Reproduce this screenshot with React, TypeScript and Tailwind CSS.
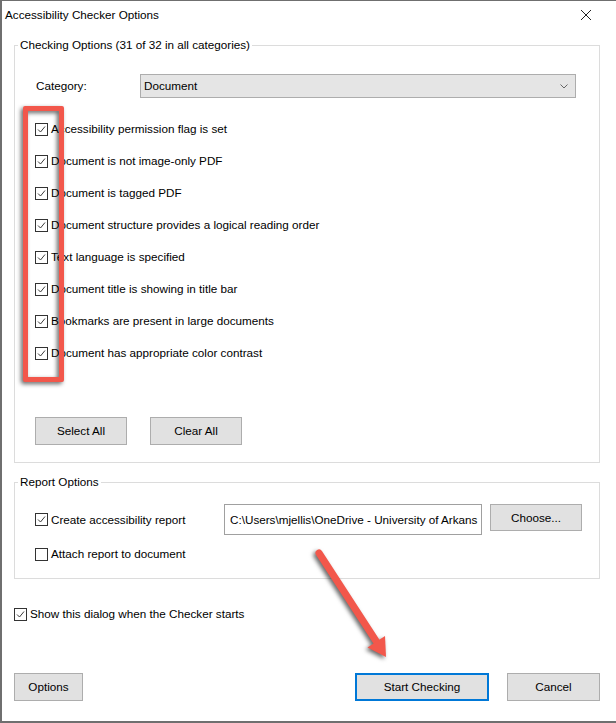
import React from "react";

const checks = [
  "Accessibility permission flag is set",
  "Document is not image-only PDF",
  "Document is tagged PDF",
  "Document structure provides a logical reading order",
  "Text language is specified",
  "Document title is showing in title bar",
  "Bookmarks are present in large documents",
  "Document has appropriate color contrast",
];

function Box({ checked = true }: { checked?: boolean }) {
  return (
    <span className="w-[13px] h-[13px] shrink-0 border border-[#333333] bg-white flex items-center justify-center">
      {checked && (
        <svg width="11" height="11" viewBox="0 0 11 11">
          <path d="M2 5.5 L4.5 8 L9 2.5" fill="none" stroke="#3c3c3c" strokeWidth="1" />
        </svg>
      )}
    </span>
  );
}

function Btn({ label, className = "" }: { label: string; className?: string }) {
  return (
    <div
      className={
        "h-[28px] flex items-center justify-center bg-[#e1e1e1] border border-[#adadad] text-black " +
        className
      }
    >
      {label}
    </div>
  );
}

export default function App() {
  return (
    <div className="relative w-[616px] h-[723px] bg-white border-t border-l-2 border-b-2 border-[#6f6f6f] text-[11.7px] leading-[14px] text-black font-['Liberation_Sans',Arial,sans-serif] overflow-hidden">
      {/* title bar */}
      <div className="h-[27px] flex items-center justify-between pl-[3px] pr-[24px]">
        <span>Accessibility Checker Options</span>
        <svg width="12" height="12" viewBox="0 0 12 12">
          <path d="M1 1 L11 11 M11 1 L1 11" stroke="#222" strokeWidth="1" />
        </svg>
      </div>

      {/* Checking options */}
      <fieldset className="mt-[10px] ml-[12px] w-[586px] border border-[#dcdcdc] pb-[17px]">
        <legend className="ml-[3px] px-[2px] leading-[14px]">Checking Options (31 of 32 in all categories)</legend>

        <div className="mt-[22px] h-[24px] flex items-center pl-[21px]">
          <span className="w-[104px]">Category:</span>
          <div className="w-[436px] h-[24px] bg-[#e5e5e5] border border-[#adadad] flex items-center justify-between pl-[3px] pr-[7px]">
            <span>Document</span>
            <svg width="8" height="5" viewBox="0 0 8 5">
              <path d="M0.5 0.5 L4 4 L7.5 0.5" fill="none" stroke="#666" strokeWidth="1" />
            </svg>
          </div>
        </div>

        <div className="mt-[15px] flex flex-col">
          {checks.map((c) => (
            <div key={c} className="h-[32px] flex items-center gap-[3px] pl-[20px]">
              <Box />
              <span>{c}</span>
            </div>
          ))}
        </div>

        <div className="mt-[48px] flex gap-[23px] pl-[20px]">
          <Btn label="Select All" className="w-[92px]" />
          <Btn label="Clear All" className="w-[92px]" />
        </div>
      </fieldset>

      {/* Report options */}
      <fieldset className="mt-[12px] ml-[12px] w-[586px] border border-[#dcdcdc] pb-[8px]">
        <legend className="ml-[3px] px-[2px] leading-[14px]">Report Options</legend>

        <div className="mt-[15px] flex items-start pl-[20px]">
          <div className="w-[189px] h-[31px] flex items-center gap-[3px]">
            <Box />
            <span>Create accessibility report</span>
          </div>
          <div className="w-[258px] h-[31px] border border-[#a0a0a0] flex items-center pl-[5px] overflow-hidden whitespace-nowrap">
            C:\Users\mjellis\OneDrive - University of Arkans
          </div>
          <Btn label="Choose..." className="ml-[8px] w-[92px] !h-[27px]" />
        </div>

        <div className="mt-[3px] h-[32px] flex items-center gap-[3px] pl-[20px]">
          <Box checked={false} />
          <span>Attach report to document</span>
        </div>
      </fieldset>

      <div className="mt-[25px] ml-[12px] h-[20px] flex items-center gap-[3px]">
        <Box />
        <span>Show this dialog when the Checker starts</span>
      </div>

      <div className="mt-[49px] ml-[12px] mr-[16px] flex justify-between">
        <Btn label="Options" className="w-[69px]" />
        <div className="flex gap-[18px]">
          <Btn label="Start Checking" className="w-[134px] !border-[#0078d7] !border-2" />
          <Btn label="Cancel" className="w-[93px]" />
        </div>
      </div>

      {/* red highlight box */}
      <div className="absolute left-[21px] top-[105px] w-[41px] h-[276px] border-[5px] border-[#f2574b] rounded-[2px] drop-shadow-[-2px_2px_2px_rgba(0,0,0,0.6)]" />

      {/* red arrow */}
      <svg
        className="absolute left-[298px] top-[538px] drop-shadow-[-2px_2px_2px_rgba(0,0,0,0.6)]"
        width="100"
        height="130"
        viewBox="298 538 100 130"
      >
        <line x1="317" y1="552" x2="376" y2="643" stroke="#f2574b" strokeWidth="7" strokeLinecap="round" />
        <polygon points="384,656 365.5,646.5 383,635" fill="#f2574b" />
      </svg>
    </div>
  );
}
